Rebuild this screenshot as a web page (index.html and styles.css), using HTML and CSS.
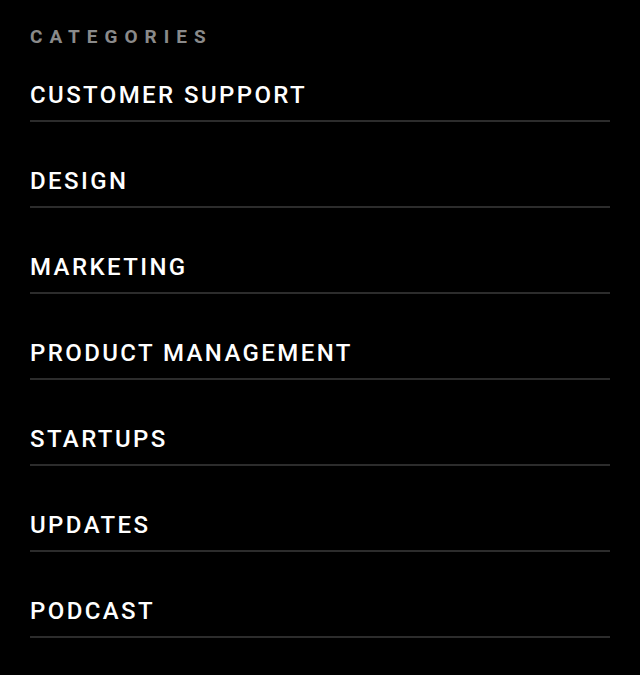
FILE: index.html
```html
<!DOCTYPE html>
<html lang="en">
<head>
<meta charset="UTF-8">
<meta name="viewport" content="width=device-width, initial-scale=1.0">
<title>Categories</title>
<link rel="stylesheet" href="styles.css">
</head>
<body>
<nav class="cats">
    <h2 class="cats-title">Categories</h2>
    <ul class="cats-list">
        <li><a href="#">Customer Support</a></li>
        <li><a href="#">Design</a></li>
        <li><a href="#">Marketing</a></li>
        <li><a href="#">Product Management</a></li>
        <li><a href="#">Startups</a></li>
        <li><a href="#">Updates</a></li>
        <li><a href="#">Podcast</a></li>
    </ul>
</nav>
</body>
</html>
```

FILE: styles.css
```css
*{box-sizing:border-box;}
html,body{background:#000;}
body{
    margin:0;
    font-family:Roboto,"Liberation Sans",sans-serif;
    color:#fff;
}
.cats{padding:26px 30px 0 30px;}
.cats-title{
    margin:0;
    font-size:19px;
    line-height:22px;
    font-weight:700;
    letter-spacing:7px;
    text-transform:uppercase;
    color:#8a8a8a;
}
.cats-list{list-style:none;margin:0;padding:0;}
.cats-list li{
    border-bottom:2px solid #2c2c2c;
}
.cats-list a{
    display:block;
    padding:45px 0 11px 0;
    line-height:28px;
    font-size:24px;
    font-weight:500;
    letter-spacing:2.4px;
    text-transform:uppercase;
    color:#fff;
    text-decoration:none;
}
.cats-list li:first-child a{padding-top:33px;}
```
